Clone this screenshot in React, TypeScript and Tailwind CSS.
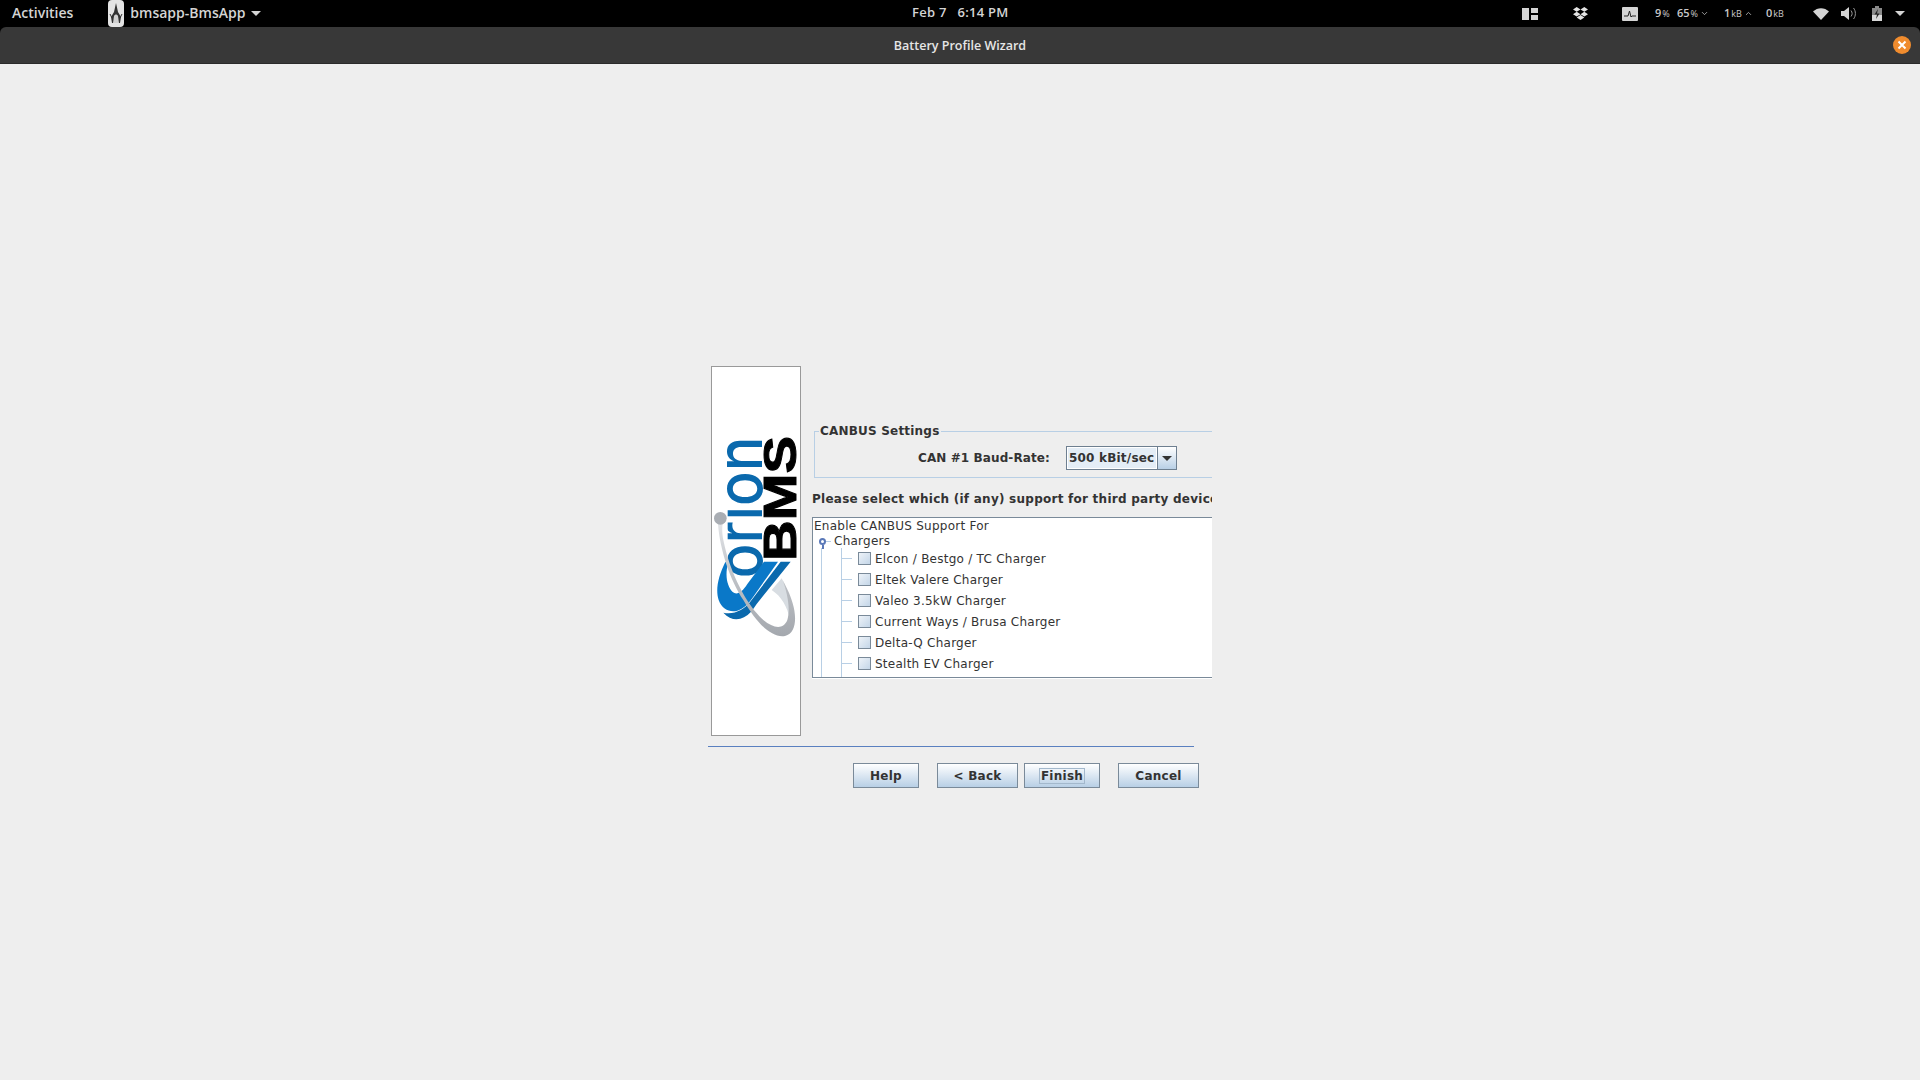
import { ChevronDown, ChevronUp } from 'lucide-react'

const chargers = [
  'Elcon / Bestgo / TC Charger',
  'Eltek Valere Charger',
  'Valeo 3.5kW Charger',
  'Current Ways / Brusa Charger',
  'Delta-Q Charger',
  'Stealth EV Charger',
]

function OrionLogo() {
  return (
    <svg width="88" height="368" viewBox="36 21 264 1104">
      <defs>
        <linearGradient id="swoosh" x1="0" y1="0" x2="0" y2="1">
          <stop offset="0" stopColor="#e2e4e7" />
          <stop offset="0.45" stopColor="#c0c3c8" />
          <stop offset="1" stopColor="#a4a8ae" />
        </linearGradient>
      </defs>
      <text
        transform="translate(185 655) rotate(-90)"
        textLength="425"
        lengthAdjust="spacingAndGlyphs"
        fontSize="190"
        fontWeight="500"
        fontFamily="Inter, sans-serif"
        fill="#0a69ad"
      >
        orion
      </text>
      <text
        transform="translate(289 603) rotate(-90)"
        textLength="375"
        lengthAdjust="spacingAndGlyphs"
        fontSize="140"
        fontWeight="700"
        fontFamily="'Liberation Sans', sans-serif"
        stroke="#000"
        strokeWidth="3"
        fill="#000"
      >
        BMS
      </text>
      {/* hides the i's own dot, the grey ball stands in for it */}
      <rect x="36" y="440" width="47" height="220" fill="#fff" />
      <path d="M76 606C54 650 46 690 56 720C66 748 90 758 112 752C132 746 148 728 162 707L234 605H192L142 672C126 698 110 706 98 696C82 678 74 650 84 610Z" fill="#0a78c8" />
      <path d="M70 758C90 780 112 782 132 772C148 764 158 750 170 732L272 605H242L152 724C132 750 100 766 70 758Z" fill="#0a69ad" />
      <path d="M245 655C265 695 278 740 270 780C262 740 245 710 215 690Z" fill="#d8dde2" />
      <path d="M54 492C60 570 90 660 130 720C170 790 215 835 255 828C290 820 290 770 278 730C270 700 258 680 248 660C262 700 272 745 262 780C250 810 220 805 190 780C140 735 90 640 70 540C66 520 66 505 68 490Z" fill="url(#swoosh)" />
      <circle cx="61" cy="475" r="19" fill="#a9adb3" />
    </svg>
  )
}

function Penguin() {
  return (
    <div className="mb-[-2px] flex h-[27px] w-4 items-center justify-center rounded-sm bg-[#e4e4e4]">
      <svg width="14" height="24" viewBox="0 0 14 24">
        <path d="M7 1L9 10L12 15L11 21H3L2 15L5 10Z" fill="#333" />
        <path d="M5 14C6 12 8 12 9 14L10 21H4Z" fill="#d0d0d0" />
        <path d="M1 12L3 16M13 12L11 16" stroke="#333" strokeWidth="1" />
      </svg>
    </div>
  )
}

function WizardButton({ label, className, focused }: { label: string; className: string; focused?: boolean }) {
  return (
    <button className={`flex h-[25px] items-center justify-center border border-[#7a8a99] bg-gradient-to-b from-white to-[#b8cfe5] text-[12px] font-bold tracking-[0.25px] text-[#333] ${className}`}>
      <span className={focused ? 'flex h-[16px] items-center border border-[#a3b8cc] px-[1px]' : ''}>{label}</span>
    </button>
  )
}

function Stat({ value, unit, arrow, className }: { value: string; unit: string; arrow?: 'up' | 'down'; className: string }) {
  return (
    <span className={`flex items-center whitespace-nowrap text-[11px] font-semibold text-[#c9c9c9] ${className}`}>
      {value}
      <span className="ml-[1px] text-[9px] font-normal">{unit}</span>
      {arrow === 'down' && <ChevronDown className="ml-[2px] h-[9px] w-[9px] shrink-0" />}
      {arrow === 'up' && <ChevronUp className="ml-[2px] h-[9px] w-[9px] shrink-0" />}
    </span>
  )
}

function TopBar() {
  return (
    <div className="relative flex h-[27px] items-center bg-black pb-[2px] font-['Open_Sans',sans-serif] text-[#d4d4d4]">
      <span className="ml-3 text-[14px] font-semibold">Activities</span>
      <div className="ml-[35px]">
        <Penguin />
      </div>
      <span className="ml-[6px] text-[14px] font-semibold">bmsapp-BmsApp</span>
      <span className="ml-[6px] mt-[2px] h-0 w-0 border-x-[5px] border-t-[5px] border-x-transparent border-t-[#d4d4d4]" />

      <span className="absolute left-[912px] mt-[1px] text-[13px] font-semibold tracking-[0.25px]">Feb 7&nbsp;&nbsp; 6:14 PM</span>

      <div className="ml-auto mt-[2px] flex items-center">
        <svg width="16" height="12" viewBox="0 0 16 12" fill="#d4d4d4">
          <path d="M0 0H7V12H0ZM9 0H16V5H9ZM9 7H16V12H9Z" />
        </svg>
        <svg className="ml-[35px]" width="15" height="13" viewBox="0 0 15 13" fill="#e4e4e4">
          <path d="M3.7 0L7.5 2.4L3.7 4.8L0 2.4ZM11.3 0L15 2.4L11.3 4.8L7.5 2.4ZM3.7 4.8L7.5 7.2L3.7 9.6L0 7.2ZM11.3 4.8L15 7.2L11.3 9.6L7.5 7.2ZM3.7 10.4L7.5 8L11.3 10.4L7.5 13Z" />
        </svg>
        <svg className="ml-[34px]" width="16" height="14" viewBox="0 0 16 14">
          <rect width="16" height="14" rx="1" fill="#d4d4d4" />
          <path d="M2 9H6L7.5 4L9 10L10 9H14" fill="none" stroke="#222" strokeWidth="1" />
        </svg>
        <Stat value="9" unit="%" className="ml-[17px] w-[12px]" />
        <Stat value="65" unit="%" arrow="down" className="ml-[10px] w-[28px]" />
        <Stat value="1" unit="kB" arrow="up" className="ml-[19px] w-[23px]" />
        <Stat value="0" unit="kB" className="ml-[19px] w-[15px]" />
        <svg className="ml-[32px]" width="16" height="12" viewBox="0 0 16 12" fill="#d4d4d4">
          <path d="M0 3.5C4.5 -1 11.5 -1 16 3.5L8 12Z" />
        </svg>
        <svg className="ml-[12px]" width="16" height="15" viewBox="0 0 16 15">
          <path d="M0 5H3L8 1V14L3 10H0Z" fill="#d4d4d4" />
          <path d="M10 4.5C11.5 6.5 11.5 8.5 10 10.5M12.5 2C15 5 15 10 12.5 13" fill="none" stroke="#9a9a9a" strokeWidth="1" />
        </svg>
        <svg className="ml-[15px]" width="10" height="15" viewBox="0 0 10 15">
          <path d="M3 0H7V2H10V15H0V2H3Z" fill="#8a8a8a" />
          <path d="M0 9H10V15H0Z" fill="#d8d8d8" />
          <path d="M6 3L2.5 8.5H5L4 13L7.5 7.5H5Z" fill="#222" />
        </svg>
        <span className="ml-[13px] mr-[15px] h-0 w-0 border-x-[5px] border-t-[5px] border-x-transparent border-t-[#d4d4d4]" />
      </div>
    </div>
  )
}

function TitleBar() {
  return (
    <div className="bg-black">
      <div className="relative flex h-[37px] items-center justify-center rounded-t-[6px] border-b border-[#2a2a2a] bg-[#383838] font-['Open_Sans',sans-serif]">
        <span className="pt-[2px] text-[12.5px] font-semibold text-[#e6e6e6]">Battery Profile Wizard</span>
        <div className="absolute right-[9px] top-[9px] flex h-[18px] w-[18px] items-center justify-center rounded-full bg-[#f08c2e]">
          <svg width="10" height="10" viewBox="0 0 10 10">
            <path d="M1.5 1.5L8.5 8.5M8.5 1.5L1.5 8.5" stroke="#fff" strokeWidth="2" />
          </svg>
        </div>
      </div>
    </div>
  )
}

function ChargerTree() {
  return (
    <div className="mt-[10px] h-[161px] overflow-hidden border-y border-l border-[#7a8a99] bg-white text-[12px] tracking-[0.25px] text-[#333] shadow-[0_1px_0_#ffffff]">
      <div className="ml-[1px] h-[16px] leading-[17px]">Enable CANBUS Support For</div>
      <div className="flex h-[14px] items-center">
        <div className="relative ml-[6px] h-[7px] w-[7px] rounded-full border-2 border-[#5a78b8] bg-white">
          <div className="absolute left-[0.5px] top-[5px] h-[4px] w-[2px] bg-[#5a78b8]" />
        </div>
        <div className="h-px w-[5px] bg-[#b8cfe5]" />
        <span className="ml-[3px] leading-[15px]">Chargers</span>
      </div>
      <div className="ml-[8px] border-l border-[#b8cfe5]">
        <div className="ml-[19px] border-l border-[#b8cfe5]">
          {chargers.map((name) => (
            <div key={name} className="flex h-[21px] items-center">
              <div className="h-px w-[10px] bg-[#b8cfe5]" />
              <div className="ml-[6px] h-[13px] w-[13px] border border-[#7a8a99] bg-gradient-to-br from-[#eef3f8] to-[#c4d6e8]" />
              <span className="ml-[4px]">{name}</span>
            </div>
          ))}
          <div className="h-[10px]" />
        </div>
      </div>
    </div>
  )
}

function WizardPanel() {
  return (
    <div className="w-[504px] font-['DejaVu_Sans',sans-serif]">
      <div className="flex pl-[3px]">
        <div className="h-[370px] w-[90px] shrink-0 border border-[#999] bg-white">
          <OrionLogo />
        </div>
        <div className="ml-[11px] w-[400px] overflow-hidden">
          <fieldset className="relative ml-[2px] mt-[58px] h-[54px] w-[500px] border border-r-0 border-[#b8cfe5]">
            <legend className="ml-[4px] px-[1px] text-[12px] font-bold leading-[14px] tracking-[0.2px] text-[#333]">CANBUS Settings</legend>
            <div className="flex items-center pt-[8px]">
              <span className="ml-[103px] w-[132px] whitespace-nowrap text-[12px] font-bold tracking-[0.1px] text-[#333]">CAN #1 Baud-Rate:</span>
              <div className="ml-[16px] flex h-[24px] w-[111px] border border-[#6e7f90]">
                <div className="flex w-[90px] items-center border border-white bg-[#e4edf6] pl-[1px] text-[12px] font-bold tracking-[0.2px] whitespace-nowrap text-[#333]">500 kBit/sec</div>
                <div className="flex w-[19px] items-center justify-center border-l border-[#6e7f90] bg-gradient-to-b from-white to-[#b8cfe5]">
                  <span className="h-0 w-0 border-x-[5px] border-t-[5px] border-x-transparent border-t-[#333]" />
                </div>
              </div>
            </div>
          </fieldset>
          <div className="mt-[14px] whitespace-nowrap text-[12px] font-bold leading-[15px] tracking-[0.25px] text-[#333]">
            Please select which (if any) support for third party devices
          </div>
          <ChargerTree />
        </div>
      </div>
      <div className="mt-[10px] h-px w-[486px] bg-[#5a80c0]" />
      <div className="mt-[16px] flex pl-[145px]">
        <WizardButton label="Help" className="w-[66px]" />
        <WizardButton label="< Back" className="ml-[18px] w-[81px]" />
        <WizardButton label="Finish" className="ml-[6px] w-[76px]" focused />
        <WizardButton label="Cancel" className="ml-[18px] w-[81px]" />
      </div>
    </div>
  )
}

export default function App() {
  return (
    <div className="flex h-[1080px] w-[1920px] flex-col overflow-hidden bg-[#eeeeee]">
      <TopBar />
      <TitleBar />
      <div className="pl-[708px] pt-[302px]">
        <WizardPanel />
      </div>
    </div>
  )
}
